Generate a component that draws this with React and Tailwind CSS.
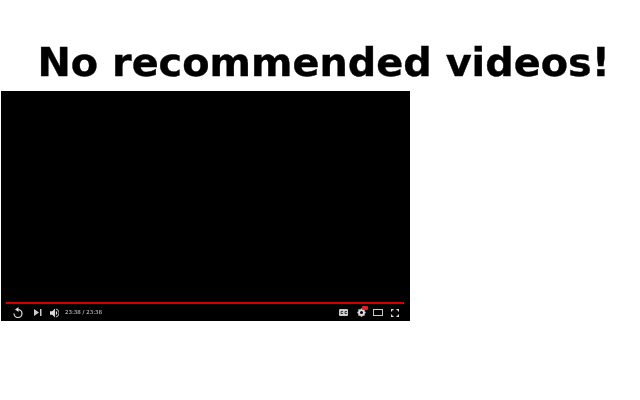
const font = { fontFamily: '"DejaVu Sans", sans-serif' };

function ReplayIcon() {
  return (
    <svg width="10" height="11" viewBox="0 0 20 22" fill="none" stroke="#ddd" strokeWidth="2.500">
      <path d="M10 5a8 8 0 1 1-8 8" />
      <path d="M11 0v10L4 5z" fill="#ddd" stroke="none" />
    </svg>
  );
}

function NextIcon() {
  return (
    <svg width="8" height="7" viewBox="0 0 8 7" fill="#ccc">
      <path d="M0 0l5 3.500L0 7z" />
      <rect x="6" y="0" width="1.500" height="7" />
    </svg>
  );
}

function VolumeIcon() {
  return (
    <svg width="9" height="10" viewBox="0 0 20 22" fill="#ddd">
      <path d="M0 7v8h5l6 6V1L5 7z" />
      <path d="M13 6a5.500 5.500 0 0 1 0 10z" />
      <path d="M13 1v2.200a8 8 0 0 1 0 15.600V21a10.300 10.300 0 0 0 0-20z" />
    </svg>
  );
}

function CcIcon() {
  return (
    <svg width="9" height="7" viewBox="0 0 9 7">
      <rect width="9" height="7" rx="1" fill="#ccc" />
      <path d="M4 2.500H2v2h2M8 2.500H6v2h2" fill="none" stroke="#222" strokeWidth="0.800" />
    </svg>
  );
}

function SettingsIcon() {
  return (
    <div className="relative h-[9px] w-[10px]">
      <svg width="9" height="9" viewBox="0 0 24 24" className="absolute left-0 top-0">
        <circle cx="12" cy="12" r="6.500" fill="none" stroke="#ddd" strokeWidth="5" />
        <path d="M12 1v5M12 18v5M1 12h5M18 12h5M4 4l4 4M16 16l4 4M4 20l4-4M16 8l4-4" stroke="#ddd" strokeWidth="4" />
      </svg>
      <div className="absolute left-[5px] top-[-2px] h-[4px] w-[6px] rounded-[1px] bg-[#e0202c]" />
    </div>
  );
}

function TheaterIcon() {
  return <div className="h-[7px] w-[10px] border border-[#ccc]" />;
}

function FullscreenIcon() {
  return (
    <svg width="8" height="8" viewBox="0 0 8 8" fill="none" stroke="#ddd" strokeWidth="1.300">
      <path d="M.5 2.500V.5h2M5.500.5h2v2M7.500 5.500v2h-2M2.500 7.500h-2v-2" />
    </svg>
  );
}

export default function App() {
  return (
    <div className="h-[400px] w-[640px] overflow-hidden bg-white" style={font}>
      <h1 className="ml-[37.500px] w-fit transform-gpu whitespace-nowrap pt-[38px] text-[39.800px] font-bold leading-[48px] text-black [-webkit-text-stroke:0.4px_#000]">
        No recommended videos!
      </h1>

      {/* video player */}
      <div className="ml-px mt-[5px] flex h-[230px] w-[409px] flex-col justify-end bg-black pl-[5px] pr-[6px]">
        <div className="h-[2px] w-full bg-[#d40000]" />
        <div className="flex h-[17px] items-center justify-between pl-[7px] pr-[5px]">
          <div className="flex items-center">
            <ReplayIcon />
            <div className="ml-[11px] flex"><NextIcon /></div>
            <div className="ml-[8px] flex"><VolumeIcon /></div>
            <span className="ml-[6px] transform-gpu text-[5.500px] text-[#ddd]">23:38 / 23:38</span>
          </div>
          <div className="flex items-center">
            <CcIcon />
            <div className="ml-[9px]"><SettingsIcon /></div>
            <div className="ml-[6px]"><TheaterIcon /></div>
            <div className="ml-[8px] flex"><FullscreenIcon /></div>
          </div>
        </div>
      </div>
    </div>
  );
}
